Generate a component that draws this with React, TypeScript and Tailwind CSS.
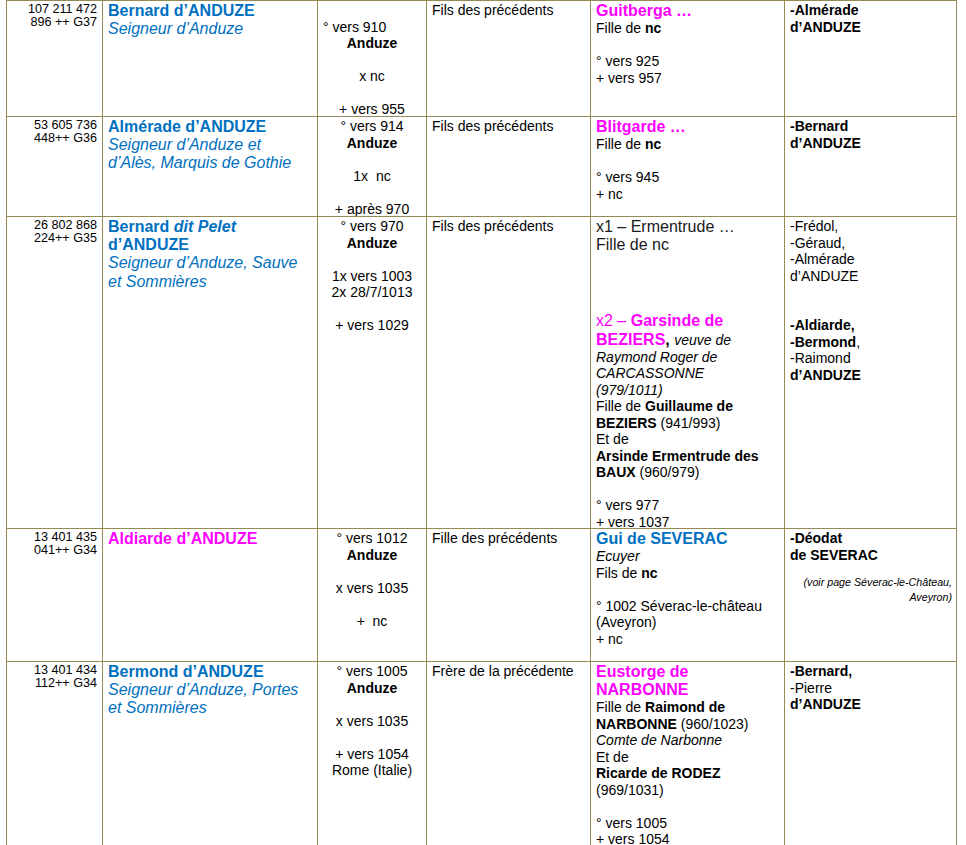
import React from 'react'

const font = { fontFamily: '"Liberation Sans", Arial, sans-serif' }

const Cell = ({ children, className = '' }: { children?: React.ReactNode; className?: string }) => (
  <div className={`border-r border-b border-[#948a54] overflow-hidden ${className}`}>{children}</div>
)

const L = ({ children, className = '' }: { children?: React.ReactNode; className?: string }) => (
  <div className={`text-[14px] leading-[16.5px] whitespace-nowrap ${className}`}>{children}</div>
)

const Big = ({ children, className = '' }: { children?: React.ReactNode; className?: string }) => (
  <div className={`text-[16px] leading-[18.2px] whitespace-nowrap ${className}`}>{children}</div>
)

const Gap = () => <div className="h-[16.5px]" />

const Num = ({ a, b }: { a: string; b: string }) => (
  <Cell className="pr-[5px] pt-[1.5px] text-right">
    <div className="text-[12.6px] leading-[13.4px]">{a}</div>
    <div className="text-[12.6px] leading-[13.4px]">{b}</div>
  </Cell>
)

export default function App() {
  return (
    <div className="bg-white min-h-screen text-black" style={font}>
      <div className="ml-[6px] w-[951px] grid grid-cols-[96px_215px_109px_164px_194px_172px] grid-rows-[116px_100px_312px_133px_200px] border-l border-t border-[#948a54]">
        {/* row 1 */}
        <Num a="107 211 472" b="896 ++ G37" />
        <Cell className="px-[5px] pt-[1px] text-[#0070c0]">
          <Big className="font-bold">Bernard d’ANDUZE</Big>
          <Big className="italic">Seigneur d’Anduze</Big>
        </Cell>
        <Cell className="px-[5px] pt-[1px] text-center">
          <Gap />
          <L className="text-left">° vers 910</L>
          <L className="font-bold">Anduze</L>
          <Gap />
          <L>x nc</L>
          <Gap />
          <L>+ vers 955</L>
        </Cell>
        <Cell className="px-[5px] pt-[1px]">
          <L>Fils des précédents</L>
        </Cell>
        <Cell className="px-[5px] pt-[1px]">
          <Big className="font-bold text-[#ff00ff]">Guitberga …</Big>
          <L>Fille de <b>nc</b></L>
          <Gap />
          <L>° vers 925</L>
          <L>+ vers 957</L>
        </Cell>
        <Cell className="px-[5px] pt-[1px]">
          <L className="font-bold">-Almérade</L>
          <L className="font-bold">d’ANDUZE</L>
        </Cell>

        {/* row 2 */}
        <Num a="53 605 736" b="448++ G36" />
        <Cell className="px-[5px] pt-[1px] text-[#0070c0]">
          <Big className="font-bold">Almérade d’ANDUZE</Big>
          <Big className="italic">Seigneur d’Anduze et</Big>
          <Big className="italic">d’Alès, Marquis de Gothie</Big>
        </Cell>
        <Cell className="px-[5px] pt-[1px] text-center">
          <L>° vers 914</L>
          <L className="font-bold">Anduze</L>
          <Gap />
          <L>1x&nbsp; nc</L>
          <Gap />
          <L>+ après 970</L>
        </Cell>
        <Cell className="px-[5px] pt-[1px]">
          <L>Fils des précédents</L>
        </Cell>
        <Cell className="px-[5px] pt-[1px]">
          <Big className="font-bold text-[#ff00ff]">Blitgarde …</Big>
          <L>Fille de <b>nc</b></L>
          <Gap />
          <L>° vers 945</L>
          <L>+ nc</L>
        </Cell>
        <Cell className="px-[5px] pt-[1px]">
          <L className="font-bold">-Bernard</L>
          <L className="font-bold">d’ANDUZE</L>
        </Cell>

        {/* row 3 */}
        <Num a="26 802 868" b="224++ G35" />
        <Cell className="px-[5px] pt-[1px] text-[#0070c0]">
          <Big className="font-bold">Bernard <i>dit Pelet</i></Big>
          <Big className="font-bold">d’ANDUZE</Big>
          <Big className="italic">Seigneur d’Anduze, Sauve</Big>
          <Big className="italic">et Sommières</Big>
        </Cell>
        <Cell className="px-[5px] pt-[1px] text-center">
          <L>° vers 970</L>
          <L className="font-bold">Anduze</L>
          <Gap />
          <L>1x vers 1003</L>
          <L>2x 28/7/1013</L>
          <Gap />
          <L>+ vers 1029</L>
        </Cell>
        <Cell className="px-[5px] pt-[1px]">
          <L>Fils des précédents</L>
        </Cell>
        <Cell className="px-[5px] pt-[1px]">
          <Big className="text-[#1a1a1a]">x1 – Ermentrude …</Big>
          <Big className="text-[#1a1a1a]">Fille de nc</Big>
          <div className="h-[58px]" />
          <Big className="text-[#ff00ff]">x2 – <b>Garsinde de</b></Big>
          <Big><b className="text-[#ff00ff]">BEZIERS</b><b>,</b> <i className="text-[14px]">veuve de</i></Big>
          <L className="italic">Raymond Roger de</L>
          <L className="italic">CARCASSONNE</L>
          <L className="italic">(979/1011)</L>
          <L>Fille de <b>Guillaume de</b></L>
          <L><b>BEZIERS</b> (941/993)</L>
          <L>Et de</L>
          <L className="font-bold">Arsinde Ermentrude des</L>
          <L><b>BAUX</b> (960/979)</L>
          <Gap />
          <L>° vers 977</L>
          <L>+ vers 1037</L>
        </Cell>
        <Cell className="px-[5px] pt-[1px]">
          <L>-Frédol,</L>
          <L>-Géraud,</L>
          <L>-Almérade</L>
          <L>d’ANDUZE</L>
          <Gap />
          <Gap />
          <L className="font-bold">-Aldiarde,</L>
          <L><b>-Bermond</b>,</L>
          <L>-Raimond</L>
          <L className="font-bold">d’ANDUZE</L>
        </Cell>

        {/* row 4 */}
        <Num a="13 401 435" b="041++ G34" />
        <Cell className="px-[5px] pt-[1px]">
          <Big className="font-bold text-[#ff00ff]">Aldiarde d’ANDUZE</Big>
        </Cell>
        <Cell className="px-[5px] pt-[1px] text-center">
          <L>° vers 1012</L>
          <L className="font-bold">Anduze</L>
          <Gap />
          <L>x vers 1035</L>
          <Gap />
          <L>+&nbsp; nc</L>
        </Cell>
        <Cell className="px-[5px] pt-[1px]">
          <L>Fille des précédents</L>
        </Cell>
        <Cell className="px-[5px] pt-[1px]">
          <Big className="font-bold text-[#0070c0]">Gui de SEVERAC</Big>
          <L className="italic">Ecuyer</L>
          <L>Fils de <b>nc</b></L>
          <Gap />
          <L>° 1002 Séverac-le-château</L>
          <L>(Aveyron)</L>
          <L>+ nc</L>
        </Cell>
        <Cell className="pl-[5px] pr-[4px] pt-[1px]">
          <L className="font-bold">-Déodat</L>
          <L className="font-bold">de SEVERAC</L>
          <div className="mt-[12px] text-right italic text-[10.7px] leading-[15px] whitespace-nowrap">
            <div>(voir page Séverac-le-Château,</div>
            <div>Aveyron)</div>
          </div>
        </Cell>

        {/* row 5 */}
        <Num a="13 401 434" b="112++ G34" />
        <Cell className="px-[5px] pt-[1px] text-[#0070c0]">
          <Big className="font-bold">Bermond d’ANDUZE</Big>
          <Big className="italic">Seigneur d’Anduze, Portes</Big>
          <Big className="italic">et Sommières</Big>
        </Cell>
        <Cell className="px-[5px] pt-[1px] text-center">
          <L>° vers 1005</L>
          <L className="font-bold">Anduze</L>
          <Gap />
          <L>x vers 1035</L>
          <Gap />
          <L>+ vers 1054</L>
          <L>Rome (Italie)</L>
        </Cell>
        <Cell className="px-[5px] pt-[1px]">
          <L>Frère de la précédente</L>
        </Cell>
        <Cell className="px-[5px] pt-[1px]">
          <Big className="font-bold text-[#ff00ff]">Eustorge de</Big>
          <Big className="font-bold text-[#ff00ff]">NARBONNE</Big>
          <L>Fille de <b>Raimond de</b></L>
          <L><b>NARBONNE</b> (960/1023)</L>
          <L className="italic">Comte de Narbonne</L>
          <L>Et de</L>
          <L className="font-bold">Ricarde de RODEZ</L>
          <L>(969/1031)</L>
          <Gap />
          <L>° vers 1005</L>
          <L>+ vers 1054</L>
        </Cell>
        <Cell className="px-[5px] pt-[1px]">
          <L className="font-bold">-Bernard,</L>
          <L>-Pierre</L>
          <L className="font-bold">d’ANDUZE</L>
        </Cell>
      </div>
    </div>
  )
}
